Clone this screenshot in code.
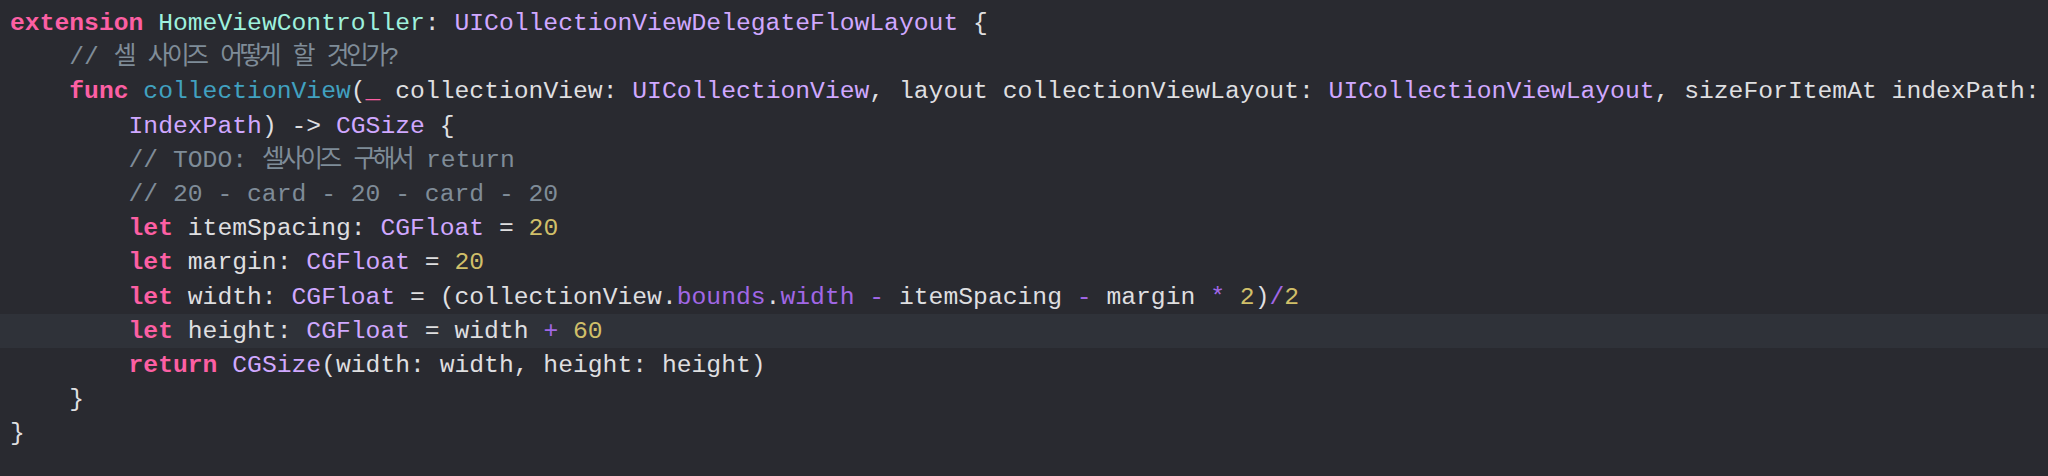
import React from 'react';

type Tok = [string, string];

// Xcode "Default (Dark)" palette
const C = {
  kw: 'text-[#FC5FA3] font-bold',
  cls: 'text-[#9EF1DD]',
  type: 'text-[#D0A8FF]',
  decl: 'text-[#41A1C0]',
  plain: 'text-[#DFDFE0]',
  cmt: 'text-[#7F8C98]',
  num: 'text-[#D0BF69]',
  prop: 'text-[#A167E6]',
  ko: 'text-[#7F8C98] tracking-[-3.5px]',
};

const lines: { indent: number; toks: Tok[]; current?: boolean }[] = [
  {
    indent: 0,
    toks: [
      [C.kw, 'extension'],
      [C.plain, ' '],
      [C.cls, 'HomeViewController'],
      [C.plain, ': '],
      [C.type, 'UICollectionViewDelegateFlowLayout'],
      [C.plain, ' {'],
    ],
  },
  {
    indent: 4,
    toks: [
      [C.cmt, '// '],
      [C.ko, '셀'],
      [C.cmt, ' '],
      [C.ko, '사이즈'],
      [C.cmt, ' '],
      [C.ko, '어떻게'],
      [C.cmt, ' '],
      [C.ko, '할'],
      [C.cmt, ' '],
      [C.ko, '것인가'],
      [C.cmt, '?'],
    ],
  },
  {
    indent: 4,
    toks: [
      [C.kw, 'func'],
      [C.plain, ' '],
      [C.decl, 'collectionView'],
      [C.plain, '('],
      [C.kw, '_'],
      [C.plain, ' collectionView: '],
      [C.type, 'UICollectionView'],
      [C.plain, ', layout collectionViewLayout: '],
      [C.type, 'UICollectionViewLayout'],
      [C.plain, ', sizeForItemAt indexPath:'],
    ],
  },
  {
    indent: 8,
    toks: [
      [C.type, 'IndexPath'],
      [C.plain, ') -> '],
      [C.type, 'CGSize'],
      [C.plain, ' {'],
    ],
  },
  {
    indent: 8,
    toks: [
      [C.cmt, '// TODO: '],
      [C.ko, '셀사이즈'],
      [C.cmt, ' '],
      [C.ko, '구해서'],
      [C.cmt, ' return'],
    ],
  },
  { indent: 8, toks: [[C.cmt, '// 20 - card - 20 - card - 20']] },
  {
    indent: 8,
    toks: [
      [C.kw, 'let'],
      [C.plain, ' itemSpacing: '],
      [C.type, 'CGFloat'],
      [C.plain, ' = '],
      [C.num, '20'],
    ],
  },
  {
    indent: 8,
    toks: [
      [C.kw, 'let'],
      [C.plain, ' margin: '],
      [C.type, 'CGFloat'],
      [C.plain, ' = '],
      [C.num, '20'],
    ],
  },
  {
    indent: 8,
    toks: [
      [C.kw, 'let'],
      [C.plain, ' width: '],
      [C.type, 'CGFloat'],
      [C.plain, ' = (collectionView.'],
      [C.prop, 'bounds'],
      [C.plain, '.'],
      [C.prop, 'width'],
      [C.plain, ' '],
      [C.prop, '-'],
      [C.plain, ' itemSpacing '],
      [C.prop, '-'],
      [C.plain, ' margin '],
      [C.prop, '*'],
      [C.plain, ' '],
      [C.num, '2'],
      [C.plain, ')'],
      [C.prop, '/'],
      [C.num, '2'],
    ],
  },
  {
    indent: 8,
    current: true,
    toks: [
      [C.kw, 'let'],
      [C.plain, ' height: '],
      [C.type, 'CGFloat'],
      [C.plain, ' = width '],
      [C.prop, '+'],
      [C.plain, ' '],
      [C.num, '60'],
    ],
  },
  {
    indent: 8,
    toks: [
      [C.kw, 'return'],
      [C.plain, ' '],
      [C.type, 'CGSize'],
      [C.plain, '(width: width, height: height)'],
    ],
  },
  { indent: 4, toks: [[C.plain, '}']] },
  { indent: 0, toks: [[C.plain, '}']] },
];

export default function App() {
  return (
    <div
      className="w-full h-[476px] bg-[#292A30] pt-[6px] overflow-hidden text-[24.7px]"
      style={{ fontFamily: "'Liberation Mono', 'Noto Sans CJK KR', monospace" }}
    >
      {lines.map((line, i) => (
        <div
          key={i}
          className={`h-[34.2px] leading-[34.2px] whitespace-pre pl-[10px] ${line.current ? 'bg-[#2F3239]' : ''}`}
        >
          <span className={C.plain}>{' '.repeat(line.indent)}</span>
          {line.toks.map(([cls, text], j) => (
            <span key={j} className={cls}>
              {text}
            </span>
          ))}
        </div>
      ))}
    </div>
  );
}
